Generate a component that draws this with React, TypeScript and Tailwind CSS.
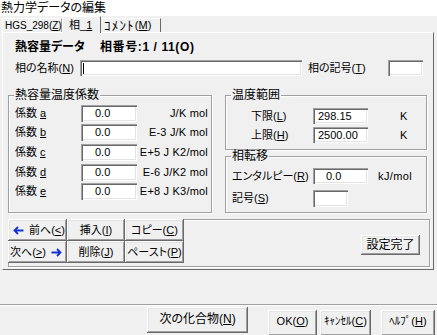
import React from "react";

const raised =
  "bg-[#f0f0f0] shadow-[inset_-1px_-1px_0_#696969,inset_1px_1px_0_#ffffff,inset_-2px_-2px_0_#a0a0a0,inset_2px_2px_0_#e3e3e3]";
const sunken =
  "bg-white shadow-[inset_1px_1px_0_#a0a0a0,inset_2px_2px_0_#696969,inset_-1px_-1px_0_#ffffff,inset_-2px_-2px_0_#e3e3e3]";
const etched =
  "border border-[#a0a0a0] shadow-[1px_1px_0_#ffffff,inset_1px_1px_0_#ffffff]";
const num = "font-['Liberation_Sans',sans-serif] text-[11px]";

function U({ children }: { children: React.ReactNode }) {
  return <span className="underline underline-offset-[1px]">{children}</span>;
}

function LeftArrow() {
  return (
    <svg width="11" height="9" viewBox="0 0 11 9" className="mr-[5px]">
      <path d="M1.5 4.5H10.5M5 1L1.5 4.5L5 8" fill="none" stroke="#1432d2" strokeWidth="1.8" />
    </svg>
  );
}

function RightArrow() {
  return (
    <svg width="11" height="9" viewBox="0 0 11 9" className="ml-[5px]">
      <path d="M0.5 4.5H9.5M6 1L9.5 4.5L6 8" fill="none" stroke="#1432d2" strokeWidth="1.8" />
    </svg>
  );
}

function Group({
  label,
  className,
  children,
}: {
  label: string;
  className: string;
  children: React.ReactNode;
}) {
  return (
    <div className={`relative ${etched} ${className}`}>
      <div className="absolute left-[5px] -top-[7px] bg-[#f0f0f0] px-[1px] text-[12px] leading-[13px]">
        {label}
      </div>
      {children}
    </div>
  );
}

function CoefRow({
  letter,
  unit,
  mt,
}: {
  letter: string;
  unit: string;
  mt: string;
}) {
  return (
    <div className={`flex items-center h-[17px] ${mt}`}>
      <div className="ml-[6px] w-[66px]">
        係数 <U>{letter}</U>
      </div>
      <div className={`w-[56px] h-[17px] ${sunken} flex items-center pl-[14px] ${num}`}>0.0</div>
      <div className={`flex-1 text-right pr-[3px] ${num} tracking-[0.2px]`}>{unit}</div>
    </div>
  );
}

export default function App() {
  return (
    <div className="w-[437px] h-[335px] bg-[#f0f0f0] overflow-hidden text-[11px] leading-none text-black font-['Liberation_Sans','Noto_Sans_CJK_JP',sans-serif] [font-feature-settings:'palt']">
      {/* title */}
      <div className="h-[16px] bg-white pl-[1px] pt-[2px] text-[12px] leading-[12px]">
        熱力学データの編集
      </div>

      {/* tabs */}
      <div className="relative z-10 h-[16px] flex items-end pl-[2px]">
        <div className="h-[14px] w-[60px] flex items-center pl-[2px] text-[10px] border-t border-l border-white border-r border-r-[#a0a0a0]">
          HGS_298(<U>Z</U>)
        </div>
        <div className="h-[17px] -mb-[1px] w-[39px] flex items-center pl-[6px] bg-[#f0f0f0] border-t border-l border-white border-r border-r-[#696969]">
          相_<U>1</U>
        </div>
        <div className="h-[14px] w-[60px] flex items-center pl-[3px] border-t border-white border-r border-r-[#696969] [font-feature-settings:normal]">
          <span className="text-[13px] tracking-[1.2px]">ｺﾒﾝﾄ</span>(<U>M</U>)
        </div>
      </div>

      {/* panel */}
      <div className="ml-[2px] w-[432px] h-[238px] border border-t-white border-l-white border-r-[#696969] border-b-[#696969] flex flex-col">
        <div className="mt-[7px] ml-[12px] h-[13px] flex items-center font-bold text-[12px]">
          <span className="w-[85px]">熱容量データ</span>
          <span className="tracking-[0.6px]">相番号:1 / 11(O)</span>
        </div>

        <div className="mt-[7px] ml-[12px] h-[16px] flex items-center">
          <div className="w-[65px]">
            相の名称(<U>N</U>)
          </div>
          <div className={`w-[222px] h-[16px] ${sunken} flex items-center pl-[3px]`}>
            <div className="w-px h-[11px] bg-black" />
          </div>
          <div className="ml-[6px] w-[80px]">
            相の記号(<U>T</U>)
          </div>
          <div className={`w-[35px] h-[16px] ${sunken}`} />
        </div>

        <div className="mt-[19px] ml-[5px] flex">
          <Group label="熱容量温度係数" className="w-[204px] h-[118px]">
            <CoefRow letter="a" unit="J/K mol" mt="mt-[9px]" />
            <CoefRow letter="b" unit="E-3 J/K mol" mt="mt-[2px]" />
            <CoefRow letter="c" unit="E+5 J K2/mol" mt="mt-[3px]" />
            <CoefRow letter="d" unit="E-6 J/K2 mol" mt="mt-[3px]" />
            <CoefRow letter="e" unit="E+8 J K3/mol" mt="mt-[2px]" />
          </Group>

          <div className="ml-[13px] w-[202px] flex flex-col">
            <Group label="温度範囲" className="h-[55px]">
              <div className="mt-[12px] flex items-center h-[16px]">
                <div className="ml-[25px] w-[62px]">
                  下限(<U>L</U>)
                </div>
                <div className={`w-[55px] h-[16px] ${sunken} flex items-center pl-[5px] ${num}`}>298.15</div>
                <div className={`ml-[32px] ${num}`}>K</div>
              </div>
              <div className="mt-[3px] flex items-center h-[16px]">
                <div className="ml-[25px] w-[62px]">
                  上限(<U>H</U>)
                </div>
                <div className={`w-[55px] h-[16px] ${sunken} flex items-center pl-[5px] ${num}`}>2500.00</div>
                <div className={`ml-[32px] ${num}`}>K</div>
              </div>
            </Group>
            <Group label="相転移" className="mt-[6px] h-[57px]">
              <div className="mt-[11px] flex items-center h-[16px]">
                <div className="ml-[6px] w-[81px]">
                  エンタルピー(<U>R</U>)
                </div>
                <div className={`w-[55px] h-[16px] ${sunken} flex items-center pl-[13px] ${num}`}>0.0</div>
                <div className={`ml-[10px] ${num} tracking-[0.4px]`}>kJ/mol</div>
              </div>
              <div className="mt-[6px] flex items-center h-[17px]">
                <div className="ml-[6px] w-[81px]">
                  記号(<U>S</U>)
                </div>
                <div className={`w-[35px] h-[17px] ${sunken}`} />
              </div>
            </Group>
          </div>
        </div>

        <div className={`mt-[6px] ml-[5px] w-[422px] h-[48px] ${etched} flex`}>
          <div className="-mt-px -ml-px grid grid-cols-[59px_58px_59px] grid-rows-[22px_22px]">
            <div className={`${raised} flex items-center pl-[5px]`}>
              <LeftArrow />
              前へ(<U>&lt;</U>)
            </div>
            <div className={`${raised} flex items-center justify-center`}>
              挿入(<U>I</U>)
            </div>
            <div className={`${raised} flex items-center justify-center`}>
              コピー(<U>C</U>)
            </div>
            <div className={`${raised} flex items-center pl-[2px]`}>
              次へ(<U>&gt;</U>)
              <RightArrow />
            </div>
            <div className={`${raised} flex items-center justify-center`}>
              削除(<U>J</U>)
            </div>
            <div className={`${raised} flex items-center justify-center`}>
              ペースト(<U>P</U>)
            </div>
          </div>
          <div className="flex-1" />
          <div className={`mt-[15px] mr-[9px] w-[59px] h-[20px] ${raised} flex items-center justify-center text-[12px]`}>
            設定完了
          </div>
        </div>
      </div>

      {/* separator */}
      <div className="mt-[34px] h-[2px] border-t border-t-[#a0a0a0] border-b border-b-white" />

      {/* bottom buttons */}
      <div className="flex items-start">
        <div className={`ml-[147px] mt-[1px] w-[101px] h-[26px] ${raised} flex items-start pt-[6px] justify-center text-[12px]`}>
          次の化合物(<U>N</U>)
        </div>
        <div className={`ml-[20px] mt-[4px] w-[49px] h-[26px] ${raised} flex items-start pt-[6px] justify-center`}>
          OK(<U>O</U>)
        </div>
        <div className={`ml-[3px] mt-[4px] w-[51px] h-[26px] ${raised} flex items-start pt-[6px] justify-center [font-feature-settings:normal]`}>
          ｷｬﾝｾﾙ(<U>C</U>)
        </div>
        <div className={`ml-[10px] mt-[4px] w-[54px] h-[26px] ${raised} flex items-start pt-[6px] justify-center [font-feature-settings:normal]`}>
          ﾍﾙﾌﾟ(<U>H</U>)
        </div>
      </div>
    </div>
  );
}
